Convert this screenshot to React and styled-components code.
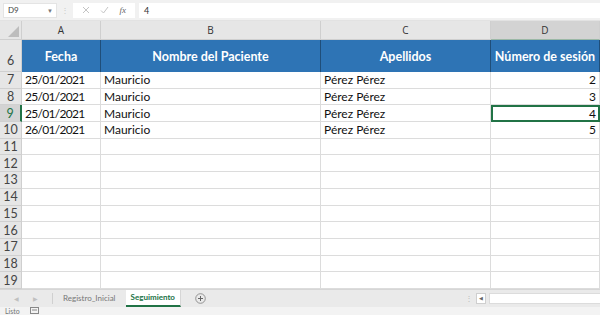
import React from 'react'
import styled, { createGlobalStyle } from 'styled-components'

const Global = createGlobalStyle`
  html, body { margin: 0; padding: 0; background: #fff; }
  body { font-family: "Lato", "Liberation Sans", sans-serif; overflow: hidden; }
`

const Page = styled.div`
  width: 600px;
  height: 315px;
  display: flex;
  flex-direction: column;
  background: #fff;
  overflow: hidden;
`

const FormulaBar = styled.div`
  height: 21px;
  background: #f1f1f1;
  display: flex;
  align-items: center;
  padding: 0 0 0 3px;
  gap: 4px;
  box-sizing: border-box;
  border-bottom: 1px solid #e2e2e2;
`

const NameBox = styled.div`
  width: 54px;
  height: 15px;
  background: #fff;
  border: 1px solid #e4e4e4;
  box-sizing: border-box;
  display: flex;
  align-items: center;
  justify-content: space-between;
  padding: 0 3px 0 4px;
  font-size: 8px;
  color: #444;
`

const Caret = styled.span`
  font-size: 6px;
  color: #777;
`

const Grip = styled.div`
  width: 8px;
  text-align: center;
  color: #c8c8c8;
  font-size: 8px;
`

const Buttons = styled.div`
  width: 62px;
  height: 15px;
  background: #fff;
  display: flex;
  align-items: center;
  justify-content: space-around;
  padding: 0 4px;
  box-sizing: border-box;
  color: #b9b9b9;
`

const FxLabel = styled.span`
  font-family: "Liberation Serif", serif;
  font-style: italic;
  font-size: 9px;
  color: #666;
`

const Formula = styled.div`
  flex: 1;
  height: 15px;
  background: #fff;
  display: flex;
  align-items: center;
  padding-left: 5px;
  font-size: 9px;
  color: #333;
`

const Sheet = styled.div`
  display: grid;
  grid-template-columns: 22px 79px 220px 170px 109px;
  grid-template-rows: 19px 32px repeat(13, 16.7px);
  background: #fff;
`

const Corner = styled.div`
  background: #e6e6e6;
  border-right: 1px solid #cfcfcf;
  border-bottom: 1px solid #cfcfcf;
  position: relative;
  &::after {
    content: '';
    position: absolute;
    right: 2px;
    bottom: 2px;
    border-left: 11px solid transparent;
    border-bottom: 11px solid #bdbdbd;
  }
`

const ColHead = styled.div`
  background: ${p => (p.$active ? '#d3d3d3' : '#e6e6e6')};
  border-right: 1px solid #cfcfcf;
  border-bottom: ${p => (p.$active ? '1px solid #9bb8a6' : '1px solid #cfcfcf')};
  display: flex;
  align-items: center;
  justify-content: center;
  font-family: "Open Sans", sans-serif;
  font-size: 10px;
  color: #333;
  box-sizing: border-box;
`

const RowHead = styled.div`
  background: ${p => (p.$active ? '#d3d3d3' : '#e6e6e6')};
  border-bottom: 1px solid #d0d0d0;
  border-right: ${p => (p.$active ? '2px solid #217346' : '1px solid #cfcfcf')};
  display: flex;
  align-items: ${p => (p.$tall ? 'flex-end' : 'center')};
  justify-content: center;
  padding-bottom: ${p => (p.$tall ? '3px' : '0')};
  font-size: 12.5px;
  color: ${p => (p.$active ? '#217346' : '#444')};
  box-sizing: border-box;
`

const HeadCell = styled.div`
  background: #2e74b5;
  color: #fff;
  font-weight: 700;
  font-size: 12.5px;
  display: flex;
  align-items: center;
  justify-content: center;
  border-right: 1px solid #1f4e79;
  box-sizing: border-box;
  white-space: nowrap;
  overflow: hidden;
`

const Cell = styled.div`
  border-right: 1px solid #dcdcdc;
  border-bottom: 1px solid #dcdcdc;
  display: flex;
  align-items: center;
  justify-content: ${p => (p.$num ? 'flex-end' : 'flex-start')};
  padding: 0 3px;
  font-size: 12px;
  letter-spacing: ${p => (p.$date ? '-0.7px' : '0')};
  color: #111;
  box-sizing: border-box;
  white-space: nowrap;
  outline: ${p => (p.$selected ? '2px solid #217346' : 'none')};
  outline-offset: -2px;
`

const TabBar = styled.div`
  height: 17px;
  background: #eaeaea;
  border-top: 1px solid #d6d6d6;
  display: flex;
  align-items: stretch;
  font-size: 8px;
  color: #777;
`

const NavArrows = styled.div`
  width: 52px;
  display: flex;
  align-items: center;
  justify-content: center;
  gap: 14px;
  color: #c0c0c0;
  font-size: 6px;
  border-right: 1px solid #d0d0d0;
  margin: 3px 0;
`

const Tab = styled.div`
  padding: 0 ${p => (p.$active ? '5px' : '10px')};
  display: flex;
  align-items: center;
  background: ${p => (p.$active ? '#fff' : 'transparent')};
  color: ${p => (p.$active ? '#217346' : '#777')};
  font-weight: ${p => (p.$active ? 700 : 400)};
  border-bottom: ${p => (p.$active ? '2px solid #217346' : 'none')};
  box-sizing: border-box;
  border-right: ${p => (p.$active ? '1px solid #d6d6d6' : 'none')};
`

const AddSheet = styled.div`
  margin-left: 14px;
  display: flex;
  align-items: center;
`

const Spacer = styled.div`
  flex: 1;
`

const Scroll = styled.div`
  width: 135px;
  display: flex;
  align-items: center;
  gap: 3px;
`

const ScrollDots = styled.span`
  color: #bbb;
  font-size: 8px;
`

const ScrollBtn = styled.div`
  width: 8px;
  height: 9px;
  background: #fff;
  border: 1px solid #cfcfcf;
  font-size: 5px;
  color: #666;
  display: flex;
  align-items: center;
  justify-content: center;
`

const Track = styled.div`
  flex: 1;
  height: 9px;
  background: #fff;
  border: 1px solid #dcdcdc;
  border-right: none;
`

const StatusBar = styled.div`
  flex: 1;
  background: #f3f3f3;
  display: flex;
  align-items: center;
  gap: 10px;
  padding-left: 5px;
  font-size: 7px;
  color: #777;
`

const rows = [
  { n: 7, fecha: '25/01/2021', nombre: 'Mauricio', apellidos: 'Pérez Pérez', sesion: 2 },
  { n: 8, fecha: '25/01/2021', nombre: 'Mauricio', apellidos: 'Pérez Pérez', sesion: 3 },
  { n: 9, fecha: '25/01/2021', nombre: 'Mauricio', apellidos: 'Pérez Pérez', sesion: 4 },
  { n: 10, fecha: '26/01/2021', nombre: 'Mauricio', apellidos: 'Pérez Pérez', sesion: 5 },
]

const emptyRows = [11, 12, 13, 14, 15, 16, 17, 18, 19]

const App = () => {
  return (
    <Page>
      <Global />
      <FormulaBar>
        <NameBox>
          D9 <Caret>▼</Caret>
        </NameBox>
        <Grip>⋮</Grip>
        <Buttons>
          <svg width="8" height="8" viewBox="0 0 8 8"><path d="M1 1L7 7M7 1L1 7" stroke="#c4c4c4" strokeWidth="1" /></svg>
          <svg width="9" height="8" viewBox="0 0 9 8"><path d="M1 4.5L3.5 7L8 1" stroke="#c4c4c4" strokeWidth="1" fill="none" /></svg>
          <FxLabel>fx</FxLabel>
        </Buttons>
        <Formula>4</Formula>
      </FormulaBar>
      <Sheet>
        <Corner />
        <ColHead>A</ColHead>
        <ColHead>B</ColHead>
        <ColHead>C</ColHead>
        <ColHead $active>D</ColHead>

        <RowHead $tall>6</RowHead>
        <HeadCell>Fecha</HeadCell>
        <HeadCell>Nombre del Paciente</HeadCell>
        <HeadCell>Apellidos</HeadCell>
        <HeadCell>Número de sesión</HeadCell>

        {rows.map(r => (
          <React.Fragment key={r.n}>
            <RowHead $active={r.n === 9}>{r.n}</RowHead>
            <Cell $date>{r.fecha}</Cell>
            <Cell>{r.nombre}</Cell>
            <Cell>{r.apellidos}</Cell>
            <Cell $num $selected={r.n === 9}>{r.sesion}</Cell>
          </React.Fragment>
        ))}

        {emptyRows.map(n => (
          <React.Fragment key={n}>
            <RowHead>{n}</RowHead>
            <Cell />
            <Cell />
            <Cell />
            <Cell />
          </React.Fragment>
        ))}
      </Sheet>
      <TabBar>
        <NavArrows>
          <span>◀</span>
          <span>▶</span>
        </NavArrows>
        <Tab>Registro_Inicial</Tab>
        <Tab $active>Seguimiento</Tab>
        <AddSheet>
          <svg width="11" height="11" viewBox="0 0 11 11">
            <circle cx="5.5" cy="5.5" r="4.8" fill="none" stroke="#8a8a8a" strokeWidth="0.9" />
            <path d="M5.5 3V8M3 5.5H8" stroke="#666" strokeWidth="1" />
          </svg>
        </AddSheet>
        <Spacer />
        <Scroll>
          <ScrollDots>⋮</ScrollDots>
          <ScrollBtn>◀</ScrollBtn>
          <Track />
        </Scroll>
      </TabBar>
      <StatusBar>
        <span>Listo</span>
        <svg width="9" height="7" viewBox="0 0 9 7"><rect x="0.5" y="0.5" width="8" height="6" fill="none" stroke="#888" /><path d="M2 3H7" stroke="#888" /></svg>
      </StatusBar>
    </Page>
  )
}

export default App
